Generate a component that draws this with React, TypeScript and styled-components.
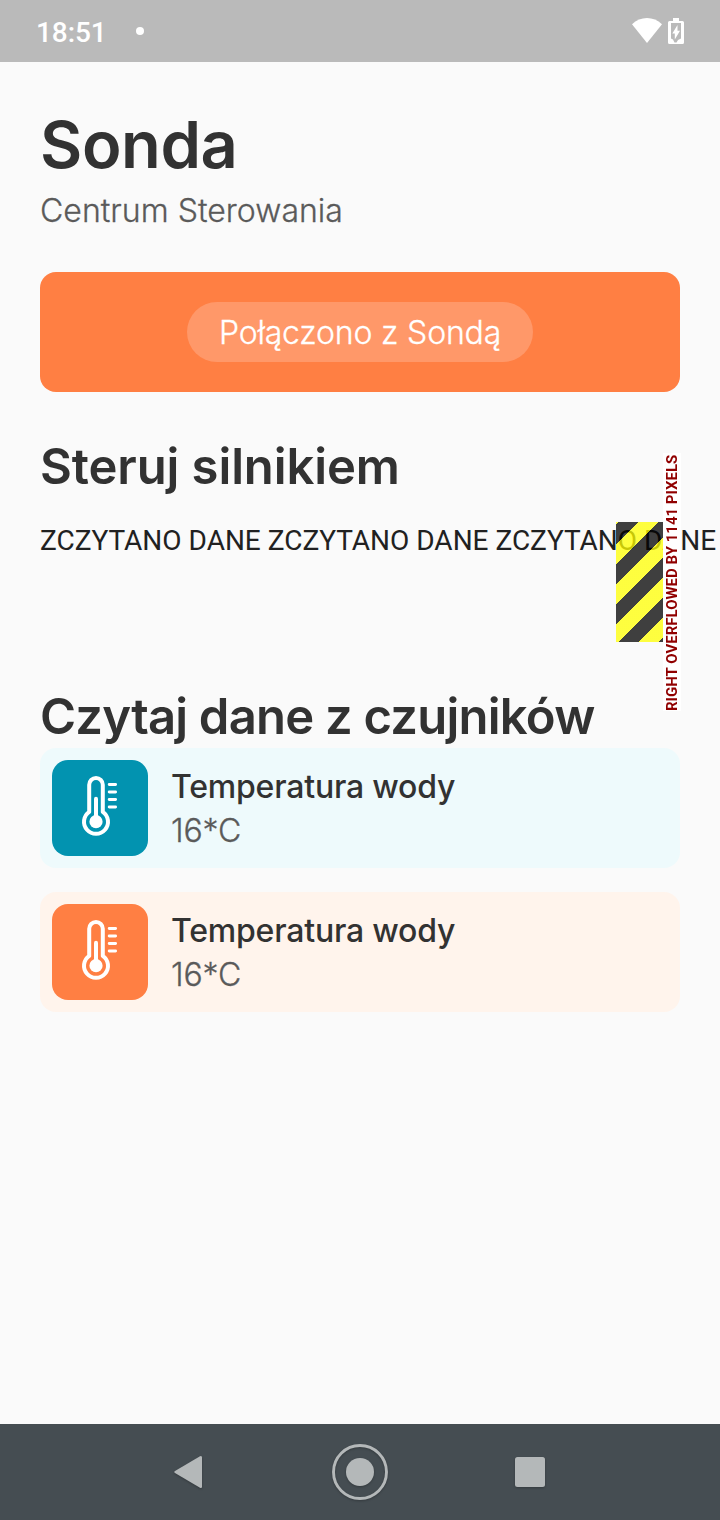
import React from "react";
import styled, { createGlobalStyle } from "styled-components";

const GlobalStyle = createGlobalStyle`
  * { box-sizing: border-box; }
  body { margin: 0; background: #fafafa; overflow: hidden; }
`;

const Screen = styled.div`
  display: flex;
  flex-direction: column;
  width: 720px;
  height: 1520px;
  overflow: hidden;
  background: #fafafa;
  color: #323232;
  font-family: Inter, "Noto Sans", sans-serif;
`;

const StatusBar = styled.header`
  display: flex;
  align-items: center;
  height: 62px;
  flex: none;
  padding: 0 35px 0 36px;
  background: #bababa;
  color: #fff;
`;

const Clock = styled.span`
  font: 500 28px/32px Roboto, sans-serif;
  letter-spacing: -0.1px;
  padding-top: 3px;
`;

const NotificationDot = styled.span`
  width: 8px;
  height: 8px;
  margin-left: 29px;
  border-radius: 50%;
  background: #fff;
`;

const StatusIcons = styled.div`
  display: flex;
  gap: 6px;
  margin-left: auto;

  svg { display: block; }
`;

const Content = styled.main`
  display: flex;
  flex-direction: column;
  flex: 1;
  padding: 40px 40px 0;
`;

const Title = styled.h1`
  margin: 0;
  height: 88px;
  font-size: 65px;
  line-height: 85px;
  font-weight: 600;
  letter-spacing: -0.4px;
  white-space: nowrap;
`;

const Subtitle = styled.p`
  margin: 0 0 38px;
  height: 44px;
  font-size: 32px;
  line-height: 42px;
  font-weight: 300;
  letter-spacing: 0.03px;
  color: #5a5a5a;
  -webkit-text-stroke: 0.3px;
  white-space: nowrap;
`;

const ConnectionCard = styled.section`
  display: flex;
  align-items: center;
  justify-content: center;
  height: 120px;
  border-radius: 16px;
  background: #ff7f43;
`;

const ConnectionPill = styled.div`
  display: flex;
  justify-content: center;
  width: 346px;
  height: 60px;
  border-radius: 30px;
  background: #ff9869;
  color: #fff;
  font-size: 32px;
  line-height: 61px;
  font-weight: 300;
  letter-spacing: -0.18px;
  -webkit-text-stroke: 0.3px;
  white-space: nowrap;
`;

const SectionTitle = styled.h2<{ $spacing: number }>`
  margin: 42px 0 0;
  height: 64px;
  font-size: 49px;
  line-height: 66px;
  font-weight: 600;
  letter-spacing: ${(p) => p.$spacing}px;
  white-space: nowrap;
`;

const MotorRow = styled.div`
  position: relative;
  height: 120px;
  margin-top: 24px;
  margin-right: -40px;
  padding-top: 2px;
`;

const MotorText = styled.div`
  color: #212121;
  font: 400 28px/33px Roboto, sans-serif;
  white-space: nowrap;
`;

const OverflowStripes = styled.div`
  position: absolute;
  top: 0;
  right: 57px;
  width: 47px;
  height: 120px;
  background: repeating-linear-gradient(
    135deg,
    rgba(255, 255, 0, 0.75) 0 2.12px,
    rgba(0, 0, 0, 0.75) 2.12px 16.26px,
    rgba(255, 255, 0, 0.75) 16.26px 28.28px
  );
`;

const OverflowLabel = styled.div`
  position: absolute;
  top: -69px;
  right: 39px;
  width: 18px;
  height: 258px;
  background: #fff;
  color: #900000;
  font: 700 15px/18px Roboto, sans-serif;
  white-space: nowrap;
  writing-mode: vertical-rl;
  transform: rotate(180deg);
`;

const SensorList = styled.div`
  display: flex;
  flex-direction: column;
  gap: 24px;
`;

const SensorCard = styled.article<{ $tint: string }>`
  display: flex;
  gap: 23px;
  height: 120px;
  padding: 12px;
  border-radius: 16px;
  background: ${(p) => p.$tint};
`;

const SensorTile = styled.div<{ $color: string }>`
  width: 96px;
  height: 96px;
  border-radius: 16px;
  background: ${(p) => p.$color};

  svg { display: block; }
`;

const SensorText = styled.div`
  display: flex;
  flex-direction: column;
  padding-top: 5px;
  white-space: nowrap;
`;

const SensorName = styled.span`
  font-size: 32px;
  line-height: 44px;
  font-weight: 500;
  letter-spacing: -0.2px;
`;

const SensorValue = styled.span`
  font-size: 32px;
  line-height: 44px;
  font-weight: 300;
  letter-spacing: -0.2px;
  color: #5a5a5a;
  -webkit-text-stroke: 0.3px;
`;

const NavBar = styled.nav`
  flex: none;
  height: 96px;
  background: #454d52;

  svg { display: block; filter: drop-shadow(0 1px 1px rgba(0, 0, 0, 0.25)); }
`;

const WifiIcon = () => (
  <svg width="30" height="26" viewBox="0 0 30 26">
    <path d="M0 6.2C8.400-2 21.600-2 30 6.200L15 25Z" fill="#fff" />
  </svg>
);

const BatteryIcon = () => (
  <svg width="17" height="26" viewBox="0 0 17 26">
    <path
      fill="#fff"
      fillRule="evenodd"
      d="M5 0H11V3H14.500Q16 3 16 4.500V24.500Q16 26 14.500 26H1.500Q0 26 0 24.500V4.500Q0 3 1.500 3H5ZM3 5V20.500L5 21.500L6.500 24.500H8.500L10 22L13 20.500V5Z"
    />
    <path d="M9.500 7V12.800H12L6.800 21.500V15.500H4.300Z" fill="#fff" />
  </svg>
);

const ThermometerIcon = () => (
  <svg width="96" height="96" viewBox="0 0 96 96" fill="none" stroke="#fff" strokeLinecap="round">
    <path d="M37.200 51.900V24.800a6.800 6.800 0 0 1 13.600 0V51.900a12 12 0 1 1-13.600 0Z" strokeWidth="4" strokeLinejoin="round" />
    <path d="M44 38.700V58" strokeWidth="4" />
    <circle cx="44" cy="61.700" r="6.600" fill="#fff" stroke="none" />
    <path d="M57.200 24.500H63.600M57.200 32H63.600M57.200 39.500H63.600M57.200 47H63.600" strokeWidth="2.900" />
  </svg>
);

const sensors = [
  { name: "Temperatura wody", value: "16*C", tint: "#eefafc", color: "#0293b0" },
  { name: "Temperatura wody", value: "16*C", tint: "#fff4ec", color: "#ff7f43" },
];

export default function App() {
  return (
    <Screen>
      <GlobalStyle />
      <StatusBar>
        <Clock>18:51</Clock>
        <NotificationDot />
        <StatusIcons>
          <WifiIcon />
          <BatteryIcon />
        </StatusIcons>
      </StatusBar>
      <Content>
        <Title>Sonda</Title>
        <Subtitle>Centrum Sterowania</Subtitle>
        <ConnectionCard>
          <ConnectionPill>Połączono z Sondą</ConnectionPill>
        </ConnectionCard>
        <SectionTitle $spacing={-0.1}>Steruj silnikiem</SectionTitle>
        <MotorRow>
          <MotorText>ZCZYTANO DANE ZCZYTANO DANE ZCZYTANO DANE</MotorText>
          <OverflowStripes />
          <OverflowLabel>RIGHT OVERFLOWED BY 1141 PIXELS</OverflowLabel>
        </MotorRow>
        <SectionTitle $spacing={-0.78}>Czytaj dane z czujników</SectionTitle>
        <SensorList>
          {sensors.map((s) => (
            <SensorCard key={s.color} $tint={s.tint}>
              <SensorTile $color={s.color}>
                <ThermometerIcon />
              </SensorTile>
              <SensorText>
                <SensorName>{s.name}</SensorName>
                <SensorValue>{s.value}</SensorValue>
              </SensorText>
            </SensorCard>
          ))}
        </SensorList>
      </Content>
      <NavBar>
        <svg width="720" height="96" viewBox="0 0 720 96" fill="#b4b8b9">
          <path d="M175 47L200 32.200Q202 31.300 202 33.500V62.500Q202 64.700 200 63.800L175 49Q173.500 48 175 47Z" />
          <circle cx="360" cy="48" r="14" />
          <circle cx="360" cy="48" r="26.500" fill="none" stroke="#b4b8b9" strokeWidth="2.900" />
          <rect x="515" y="33" width="30" height="30" rx="2.500" />
        </svg>
      </NavBar>
    </Screen>
  );
}
